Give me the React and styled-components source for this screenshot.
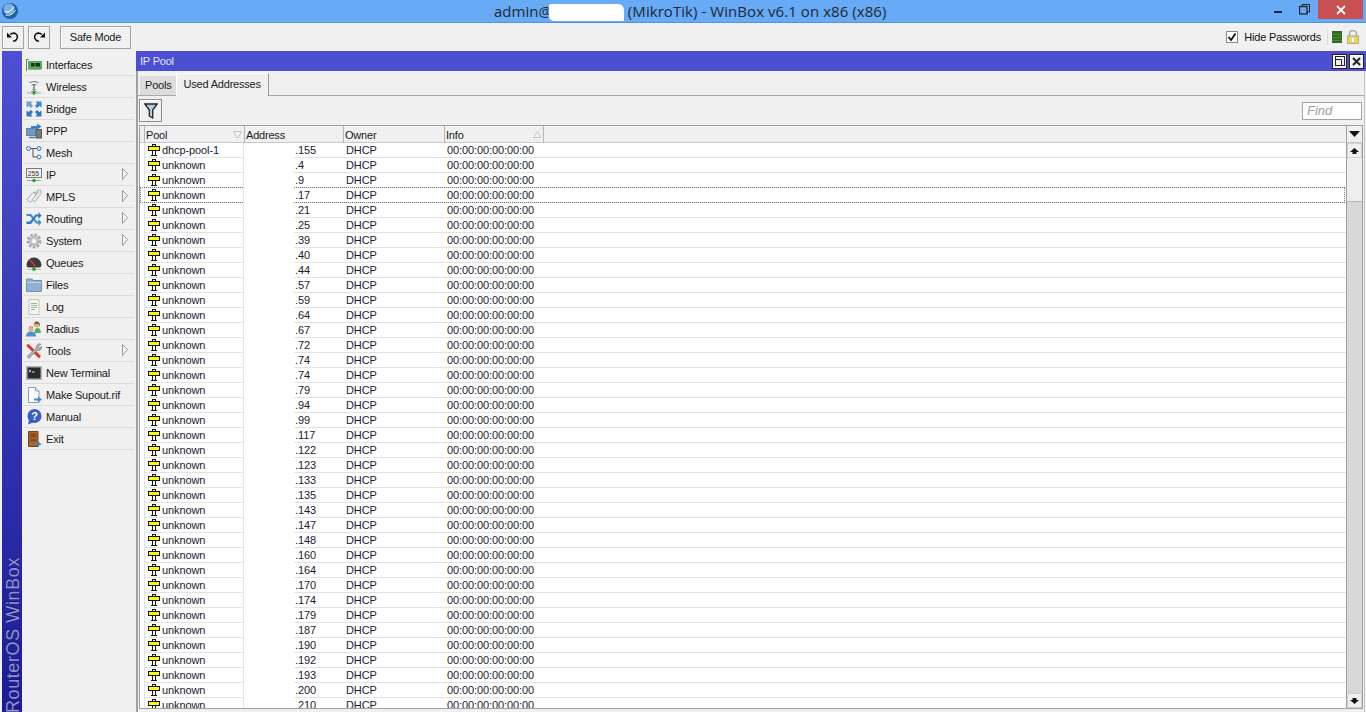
import React from "react";
import styled, { createGlobalStyle } from "styled-components";

const Global = createGlobalStyle`
  html, body { margin: 0; padding: 0; height: 100%; overflow: hidden; background: #f0f0f0; }
  #root { height: 100%; }
`;
const Page = styled.div`
  width: 1366px; height: 712px; display: flex; flex-direction: column; overflow: hidden;
  font-family: "Liberation Sans", Arial, sans-serif; font-size: 11px; letter-spacing: -0.2px; color: #1a1a1a; background: #f0f0f0;
`;
const TitleBar = styled.div`
  height: 22px; flex: none; background: #67aaf5; border-bottom: 1px solid #4f94df; display: flex; position: relative;
`;
const Logo = styled.svg`
  margin: 3px 0 0 2px;
`;
const TitleText = styled.div`
  position: absolute; left: 494px; top: 1px; font: 15px/20px "Open Sans", sans-serif; letter-spacing: 0; color: #23282f; white-space: pre;
`;
const Redact = styled.span`
  display: inline-block; width: 75px; height: 17px; background: #fff; vertical-align: -4px; margin: 0 4px 0 -3px; border-radius: 2px 6px 1px 5px;
`;
const TitleRest = styled.span`
  letter-spacing: 0.06px;
`;
const WinButtons = styled.div`
  margin-left: auto; margin-right: 3px; display: flex; height: 19px;
`;
const WinBtn = styled.div`
  width: ${p => p.$w}px; height: 19px; display: flex; align-items: center; justify-content: center; background: ${p => p.$bg || "transparent"};
`;
const ToolBar = styled.div`
  height: 28px; flex: none; display: flex; align-items: center; padding: 0 7px 0 2px; background: #f0f0f0;
`;
const ToolBtn = styled.div`
  width: 22px; height: 23px; box-sizing: border-box; border: 1px solid #a4a4a4; background: #f0f0f0; box-shadow: inset 1px 1px 0 #fff; display: flex; align-items: center; justify-content: center;
  & + & { margin-left: 4px; }
`;
const SafeMode = styled.div`
  width: 71px; height: 23px; box-sizing: border-box; margin-left: 10px; border: 1px solid #a4a4a4; box-shadow: inset 1px 1px 0 #fff; display: flex; align-items: center; justify-content: center;
`;
const HidePw = styled.div`
  margin-left: auto; display: flex; align-items: center; gap: 6px; color: #111;
`;
const Check = styled.div`
  width: 12px; height: 12px; box-sizing: border-box; border: 1px solid #8a8a8a; background: #fff; display: flex; align-items: center; justify-content: center;
`;
const Sep = styled.div`
  width: 1px; height: 16px; background: #dcdcdc;
`;
const Led = styled.svg`
  margin-left: 4px;
`;
const Lock = styled.svg`
  margin-left: 5px;
`;
const Main = styled.div`
  flex: 1; display: flex; min-height: 0;
`;
const Strip = styled.div`
  width: 20px; margin-left: 2px; flex: none; background: linear-gradient(#4d50d2, #1b1b96); position: relative; overflow: hidden;
`;
const Brand = styled.div`
  position: absolute; left: 3px; bottom: -1px; writing-mode: vertical-rl; transform: rotate(180deg); font: 18px/16px "Liberation Sans", sans-serif; letter-spacing: 0.6px; color: #9194c0; text-shadow: 1px 0 0 #15157a; white-space: nowrap;
`;
const Menu = styled.div`
  width: 110px; margin-left: 2px; flex: none; display: flex; flex-direction: column; padding-top: 3px;
`;
const MenuItem = styled.div`
  height: 21px; flex: none; border-bottom: 1px solid #dcdcdc; display: flex; align-items: center; position: relative; padding-left: 2px; gap: 4px; color: #1a1a1a;
`;
const IconBox = styled.div`
  width: 16px; height: 16px; flex: none; display: flex; align-items: center; justify-content: center;
`;
const Arrow = styled.svg`
  position: absolute; right: 6px; top: 4px;
`;
const Win = styled.div`
  flex: 1; margin-left: 2px; display: flex; flex-direction: column; min-width: 0;
`;
const WinTitle = styled.div`
  height: 20px; flex: none; background: #4c4fcf; color: #e2e3f6; display: flex; align-items: center; padding: 0 2px 0 4px;
`;
const WinTitleBtns = styled.div`
  margin-left: auto; display: flex; gap: 2px;
`;
const SmallBtn = styled.div`
  width: 15px; height: 15px; box-sizing: border-box; background: #f0f0f0; border: 1px solid #222; box-shadow: inset 1px 1px 0 #fff; display: flex; align-items: center; justify-content: center;
`;
const Content = styled.div`
  flex: 1; min-height: 0; display: flex; flex-direction: column; border-left: 2px solid #a0a0a0; border-right: 1px solid #c4c4c4; margin-right: 1px;
`;
const Tabs = styled.div`
  height: 24px; flex: none; display: flex; align-items: flex-end; padding-left: 2px; border-bottom: 1px solid #a8a8a8; position: relative;
`;
const Tab = styled.div`
  height: 19px; padding: 0 4px 0 5px; line-height: 19px; background: #dcdcdc; color: #222;
`;
const ActiveTab = styled.div`
  height: 23px; margin-bottom: -1px; box-sizing: border-box; padding: 3px 7px 0 7px; line-height: 14px; background: #f0f0f0; border-top: 1px solid #fff; border-left: 1px solid #fff; border-right: 1px solid #9a9a9a; color: #222;
`;
const FilterBar = styled.div`
  height: 29px; flex: none; display: flex; align-items: center; padding: 0 2px 0 1px;
`;
const FilterBtn = styled.div`
  width: 23px; height: 23px; box-sizing: border-box; border: 1px solid #8c8c8c; box-shadow: inset 1px 1px 0 #fff; display: flex; align-items: center; justify-content: center;
`;
const Find = styled.div`
  margin-left: auto; width: 60px; height: 18px; box-sizing: border-box; border: 1px solid #a4a4a4; background: #fff; color: #a0a0a0; font-style: italic; font-size: 13px; letter-spacing: 0; padding-left: 4px; line-height: 16px;
`;
const TableWrap = styled.div`
  flex: 1; min-height: 0; margin: 0 1px 3px 1px; border: 1px solid #a0a0a0; display: grid; grid-template-columns: 1fr 16px; grid-template-rows: 17px 1fr; overflow: hidden; box-sizing: border-box;
`;
const Head = styled.div`
  display: grid; grid-template-columns: 4px 100px 99px 101px 99px 1fr; background: #f0f0f0; border-bottom: 1px solid #c8c8c8; box-sizing: border-box;
`;
const HeadCell = styled.div`
  border-left: 1px solid #b5b5b5; padding-left: 1px; padding-top: 1px; line-height: 16px; position: relative; white-space: nowrap;
`;
const Sort = styled.svg`
  position: absolute; right: 2px; top: 5px;
`;
const Corner = styled.div`
  display: flex; align-items: center; justify-content: center; border-left: 1px solid #a0a0a0; border-bottom: 1px solid #c8c8c8; box-sizing: border-box; background: #f0f0f0;
`;
const Body = styled.div`
  background: #fff; overflow: hidden; position: relative;
`;
const Blank = styled.div`
  position: absolute; left: 104px; width: 50px; top: 0; bottom: 0; background: #fff; z-index: 3;
`;
const Row = styled.div`
  height: 15px; margin-left: 4px; box-sizing: border-box; display: grid; grid-template-columns: 100px 99px 101px 99px 1fr; border-bottom: 1px solid #e2e2e2; position: relative; line-height: 14px; letter-spacing: -0.1px; color: #1a1a2e;
`;
const Cell = styled.div`
  padding-left: ${p => p.$pad || 3}px; white-space: nowrap; overflow: hidden; display: flex; align-items: center;
`;
const PoolCell = styled(Cell)`
  padding-left: 3px; gap: 2px; border-left: 1px solid #e2e2e2; border-right: 1px solid #e2e2e2;
`;
const Focus = styled.div`
  position: absolute; left: -4px; right: 1px; top: -1px; bottom: -1px; border: 1px dotted #777; pointer-events: none; z-index: 2;
`;
const Scroll = styled.div`
  display: flex; flex-direction: column; border-left: 1px solid #a0a0a0; background: #d8d8d8; min-height: 0;
`;
const ScrollBtn = styled.div`
  height: 15px; flex: none; background: #f0f0f0; border: 1px solid #d0d0d0; box-sizing: border-box; display: flex; align-items: center; justify-content: center;
`;
const Thumb = styled.div`
  height: 44px; flex: none; background: #eeeeee; border-bottom: 1px solid #b8b8b8; box-sizing: border-box;
`;
const Track = styled.div`
  flex: 1;
`;

const Svg = ({ children }) => <svg width="16" height="16" viewBox="0 0 16 16">{children}</svg>;

const icons = {
  interfaces: <Svg><path d="M.5 2v12M.5 2.500h2.500" stroke="#777" fill="none" /><rect x="2" y="4" width="14" height="8" fill="#58a85e" /><path d="M2 12.500h13" stroke="#8fb88f" /><rect x="5" y="6" width="3.500" height="3.500" fill="#20321f" /><rect x="9.500" y="6" width="4.500" height="3.500" fill="#20321f" /></Svg>,
  wireless: <Svg><path d="M3.500 3.500q4.500-2 9 0M5.500 6q2.500-1.200 5 0" stroke="#777" fill="none" /><path d="M8 6v7" stroke="#777" strokeWidth="1.400" /><path d="M6 10.500h4M5 12.500h6" stroke="#999" /><path d="M1 14h14" stroke="#7dbf84" /><circle cx="8" cy="14" r="1.700" fill="#2f9a3e" /></Svg>,
  bridge: <Svg><path d="M.5 .5h6L5 2.500 7 5 5 7 2.500 5 .5 6.500z" fill="#6aa6d8" /><path d="M15.500 .5h-6L11 2.500 9 5l2 2 2.500-2 2 1.500z" fill="#3a86c8" /><path d="M.5 15.500h6L5 13.500 7 11 5 9l-2.500 2-2-1.500z" fill="#2f78c0" /><path d="M15.500 15.500h-6l1.500-2L9 11l2-2 2.500 2 2-1.500z" fill="#2f78c0" /></Svg>,
  ppp: <Svg><rect x="0.500" y="5.500" width="10" height="7" fill="#5f9fd8" stroke="#7b7f86" /><path d="M3 14.500h6" stroke="#666" strokeWidth="1.400" /><rect x="10" y="6.500" width="5.500" height="8.500" fill="#777b82" stroke="#555" /><path d="M5 3h6V.5L15.500 3.500 11 6.500V5H5z" fill="#2f7fd0" /></Svg>,
  mesh: <Svg><circle cx="2.500" cy="3.500" r="2" fill="#dbe8f5" stroke="#3a78b8" /><circle cx="13" cy="3.500" r="2" fill="#dbe8f5" stroke="#3a78b8" /><circle cx="13" cy="12" r="2" fill="#dbe8f5" stroke="#3a78b8" /><path d="M4.500 3.500h6.500M7 3.500v8.500h4" stroke="#555" fill="none" /></Svg>,
  ip: <Svg><rect x="0.500" y="1.500" width="15" height="9" fill="#f2f2f2" stroke="#777" /><text x="1.800" y="8.700" fontSize="6.800" letterSpacing="0" fontFamily="Liberation Sans" fill="#333">255</text><path d="M1 13.500h14" stroke="#7dbf84" /><circle cx="8" cy="13.500" r="1.700" fill="#2f9a3e" /></Svg>,
  mpls: <Svg><path d="M.8 10.500L7 3.500l3.500-.5.500 3.500-6.500 7z" fill="#efefef" stroke="#a8a8a8" /><path d="M6 11l6-7.500-1-2 3.500-.5.800 3.500-6.500 8.500z" fill="#e8e8e8" stroke="#b0b0b0" /><circle cx="9" cy="5" r=".8" fill="#999" /></Svg>,
  routing: <Svg><path d="M.5 3h4.500l6 7.500h1.500V8l3 3.500-3 3.500v-2.500H10L4 5H.5z" fill="#3a8ad8" /><path d="M.5 10.500H4L9.500 3.500h3V1l3 3.500-3 3.500V5.500h-2l-5.500 7.500H.5z" fill="#2f78c8" /></Svg>,
  system: <Svg><circle cx="8" cy="8" r="6" fill="#d6d6d6" stroke="#a8a8a8" strokeWidth="3" strokeDasharray="2.400 1.600" /><circle cx="8" cy="8" r="3.500" fill="#e2e2e2" stroke="#a5a5a5" /><circle cx="8" cy="8" r="1.500" fill="#f8f8f8" /></Svg>,
  queues: <Svg><path d="M.5 10a7.500 7.500 0 0 1 15 0q0 2-2 2.500h-11q-2-.5-2-2.500z" fill="#3c3c3c" /><path d="M3.500 4.500l6 7" stroke="#e03030" strokeWidth="1.400" /><path d="M1 14.500h14" stroke="#a9c9a9" /><circle cx="8" cy="14" r="1.900" fill="#2f9a3e" /></Svg>,
  files: <Svg><path d="M.5 2h5.500l1 1.500h8.500v11H.5z" fill="#8fb2d2" stroke="#7392b2" /><path d="M1 5.500h14" stroke="#c3d7e8" /></Svg>,
  log: <Svg><path d="M3 .5h10v15H3z" fill="#f6f6ec" stroke="#b5b5a8" strokeDasharray="1.500 .6" /><path d="M5 4.500h6M5 6.500h6M5 8.500h6M5 10.500h4" stroke="#a3b0a3" /></Svg>,
  radius: <Svg><circle cx="5" cy="8" r="2.500" fill="#e3b184" /><path d="M3 7q2-3 4 0l-.5-1.500h-3z" fill="#5b3418" /><path d="M0 15.500q0-5 5-5t5 5z" fill="#4f8ed0" /><circle cx="11" cy="4" r="2.500" fill="#e3b184" /><path d="M8 6q-.5-6 3-5.500T14 6l-1-3q-2 0-4-.5z" fill="#8a4a20" /><path d="M8.500 12q0-5 3-5t3.500 5z" fill="#4fae60" /></Svg>,
  tools: <Svg><path d="M1 1.500L2.500 1 15 13l-2 2.500L.5 3z" fill="#d83a2a" /><path d="M1 13.500L10 5a3.800 3.800 0 0 1 5-4l-2.500 2.500 1 1.500 2.300-2a3.800 3.800 0 0 1-5 4.500L3 15.500z" fill="#b0b0b0" stroke="#777" strokeWidth=".6" /></Svg>,
  terminal: <Svg><rect x="0" y="1" width="16" height="14" fill="#b4b4b4" /><rect x="1.500" y="2.500" width="13" height="11" fill="#2a2a2a" /><path d="M3 5l2 1-2 1M6 7h2.500" stroke="#ddd" fill="none" /></Svg>,
  supout: <Svg><path d="M2.500 .5h7l3.500 3.500v11.500H2.500z" fill="#fdfdfd" stroke="#8aa0b8" /><path d="M9.500 .5v3.500h3.500" fill="#dde4ee" stroke="#8aa0b8" /><path d="M8 11.500h4v-2l4 3-4 3v-2H8z" fill="#3a8ad8" /></Svg>,
  manual: <Svg><circle cx="8.500" cy="7" r="7" fill="#3a5cc4" /><path d="M3 11l-1 4.500 5-2z" fill="#3a5cc4" /><text x="8.500" y="11" textAnchor="middle" fontSize="11" fontWeight="700" letterSpacing="0" fontFamily="Liberation Sans" fill="#fff">?</text></Svg>,
  exit: <Svg><path d="M2.500 .5h9.500v15H2.500z" fill="#a9622f" stroke="#7a4218" /><rect x="4.500" y="2.500" width="5.500" height="4" fill="#8a4a20" /><rect x="4.500" y="8" width="5.500" height="2.500" fill="#8a4a20" /><path d="M8 12.500h4v-2l3.500 2.500-3.500 2.500v-1.500H8z" fill="#3a8ad8" /></Svg>,
};

const menu = [
  ["Interfaces", "interfaces"], ["Wireless", "wireless"], ["Bridge", "bridge"], ["PPP", "ppp"], ["Mesh", "mesh"],
  ["IP", "ip", 1], ["MPLS", "mpls", 1], ["Routing", "routing", 1], ["System", "system", 1], ["Queues", "queues"],
  ["Files", "files"], ["Log", "log"], ["Radius", "radius"], ["Tools", "tools", 1], ["New Terminal", "terminal"],
  ["Make Supout.rif", "supout"], ["Manual", "manual"], ["Exit", "exit"],
];

const addrs = ["155","4","9","17","21","25","39","40","44","57","59","64","67","72","74","74","79","94","99","117","122","123","133","135","143","147","148","160","164","170","174","179","187","190","192","193","200","210"];

const PoolIcon = () => (
  <svg width="12" height="13" viewBox="0 0 12 13" style={{ flex: "none" }}>
    <rect x="4.500" y="0.500" width="3" height="2" fill="#fff" stroke="#111" />
    <rect x="4.500" y="6.500" width="3" height="5" fill="#fff" stroke="#111" />
    <path d="M3 11.500h6" stroke="#111" />
    <rect x="0.500" y="2.500" width="11" height="4" fill="#ffff00" stroke="#111" />
  </svg>
);

export default function App() {
  return (
    <Page>
      <Global />
      <TitleBar>
        <Logo width="16" height="16" viewBox="0 0 16 16">
          <circle cx="8" cy="8" r="8" fill="#235d9e" />
          <circle cx="7" cy="6" r="5.500" fill="#7fb2e4" />
          <path d="M2.500 8.500q5 2.500 9.500-5" stroke="#fff" fill="none" />
          <path d="M3.500 12q7 1.500 10-5" stroke="#dcebf8" fill="none" />
        </Logo>
        <TitleText>admin@<Redact /><TitleRest>(MikroTik) - WinBox v6.1 on x86 (x86)</TitleRest></TitleText>
        <WinButtons>
          <WinBtn $w={24}><svg width="8" height="6"><rect y="4" width="8" height="2" fill="#222" /></svg></WinBtn>
          <WinBtn $w={28}><svg width="11" height="11"><rect x=".5" y="2.500" width="7.500" height="7.500" fill="none" stroke="#222" strokeWidth="1.300" /><path d="M3 2.500V.5h7.500v7.500H8" fill="none" stroke="#222" /></svg></WinBtn>
          <WinBtn $w={45} $bg="#c75050"><svg width="10" height="10"><path d="M1 1l8 8M9 1l-8 8" stroke="#fff" strokeWidth="1.800" /></svg></WinBtn>
        </WinButtons>
      </TitleBar>
      <ToolBar>
        <ToolBtn><svg width="14" height="14" viewBox="0 0 14 14"><path d="M4 4.500q3.500-2.500 6-.5t.5 5.500q-1.500 2-3.500 1.500" fill="none" stroke="#111" strokeWidth="1.500" /><path d="M1 2.500l5 5H1z" fill="#111" /></svg></ToolBtn>
        <ToolBtn><svg width="14" height="14" viewBox="0 0 14 14"><path d="M10 4.500q-3.500-2.500-6-.5t-.5 5.500q1.500 2 3.500 1.500" fill="none" stroke="#111" strokeWidth="1.500" /><path d="M13 2.500l-5 5h5z" fill="#111" /></svg></ToolBtn>
        <SafeMode>Safe Mode</SafeMode>
        <HidePw>
          <Check><svg width="10" height="10"><path d="M1.500 5l2.500 3L8.500 1.500" stroke="#111" strokeWidth="1.800" fill="none" /></svg></Check>
          Hide Passwords
          <Sep />
        </HidePw>
        <Led width="10" height="12"><rect width="10" height="12" fill="#2e6b1e" /><path d="M0 3.500h10M0 6.500h10M0 9.500h10" stroke="#4f8a30" /></Led>
        <Lock width="12" height="14" viewBox="0 0 12 14"><path d="M2.500 6V3.500a3.500 3 0 0 1 7 0V6" fill="none" stroke="#aaa" strokeWidth="1.500" /><rect x=".5" y="6" width="11" height="7.500" fill="#f0d552" stroke="#aaa" /><rect x="5" y="8" width="2" height="4" fill="#fff" /></Lock>
      </ToolBar>
      <Main>
        <Strip><Brand>RouterOS WinBox</Brand></Strip>
        <Menu>
          {menu.map(([label, icon, more]) => (
            <MenuItem key={label}>
              <IconBox>{icons[icon]}</IconBox>
              {label}
              {more && <Arrow width="6" height="12" viewBox="0 0 6 12"><path d="M.5 .5v11L5.500 5.500z" fill="#f6f6f6" stroke="#999" /></Arrow>}
            </MenuItem>
          ))}
        </Menu>
        <Win>
          <WinTitle>
            IP Pool
            <WinTitleBtns>
              <SmallBtn><svg width="10" height="10"><rect x=".5" y=".5" width="9" height="9" fill="none" stroke="#222" /><path d="M.5 3.500h6v6" fill="none" stroke="#222" /></svg></SmallBtn>
              <SmallBtn><svg width="9" height="9"><path d="M1 1l7 7M8 1l-7 7" stroke="#222" strokeWidth="2" /></svg></SmallBtn>
            </WinTitleBtns>
          </WinTitle>
          <Content>
            <Tabs>
              <Tab>Pools</Tab>
              <ActiveTab>Used Addresses</ActiveTab>
            </Tabs>
            <FilterBar>
              <FilterBtn><svg width="14" height="16" viewBox="0 0 14 16"><path d="M.8 1h12.400L8.700 7v8l-3.400-2V7z" fill="#b9cbda" stroke="#222" strokeWidth="1.300" /></svg></FilterBtn>
              <Find>Find</Find>
            </FilterBar>
            <TableWrap>
              <Head>
                <div />
                <HeadCell>Pool<Sort width="9" height="8"><path d="M.5 .5h8L4.500 7.500z" fill="none" stroke="#c4c4c4" /></Sort></HeadCell>
                <HeadCell>Address</HeadCell>
                <HeadCell>Owner</HeadCell>
                <HeadCell>Info<Sort width="8" height="7"><path d="M.5 6.500h7L4.500 .5z" fill="#f8f8f8" stroke="#c4c4c4" /></Sort></HeadCell>
                <HeadCell />
              </Head>
              <Corner><svg width="11" height="6"><path d="M0 0h11L5.500 6z" fill="#111" /></svg></Corner>
              <Body>
                <Blank />
                {addrs.map((a, i) => (
                  <Row key={i}>
                    <PoolCell><PoolIcon />{i === 0 ? "dhcp-pool-1" : "unknown"}</PoolCell>
                    <Cell $pad={51}>.{a}</Cell>
                    <Cell>DHCP</Cell>
                    <Cell>00:00:00:00:00:00</Cell>
                    <Cell />
                    {i === 3 && <Focus />}
                  </Row>
                ))}
              </Body>
              <Scroll>
                <ScrollBtn><svg width="9" height="6"><path d="M4.500 0L9 4H6.500v2h-4V4H0z" fill="#111" /></svg></ScrollBtn>
                <Thumb />
                <Track />
                <ScrollBtn><svg width="9" height="6"><path d="M4.500 6L9 2H6.500V0h-4v2H0z" fill="#111" /></svg></ScrollBtn>
              </Scroll>
            </TableWrap>
          </Content>
        </Win>
      </Main>
    </Page>
  );
}
